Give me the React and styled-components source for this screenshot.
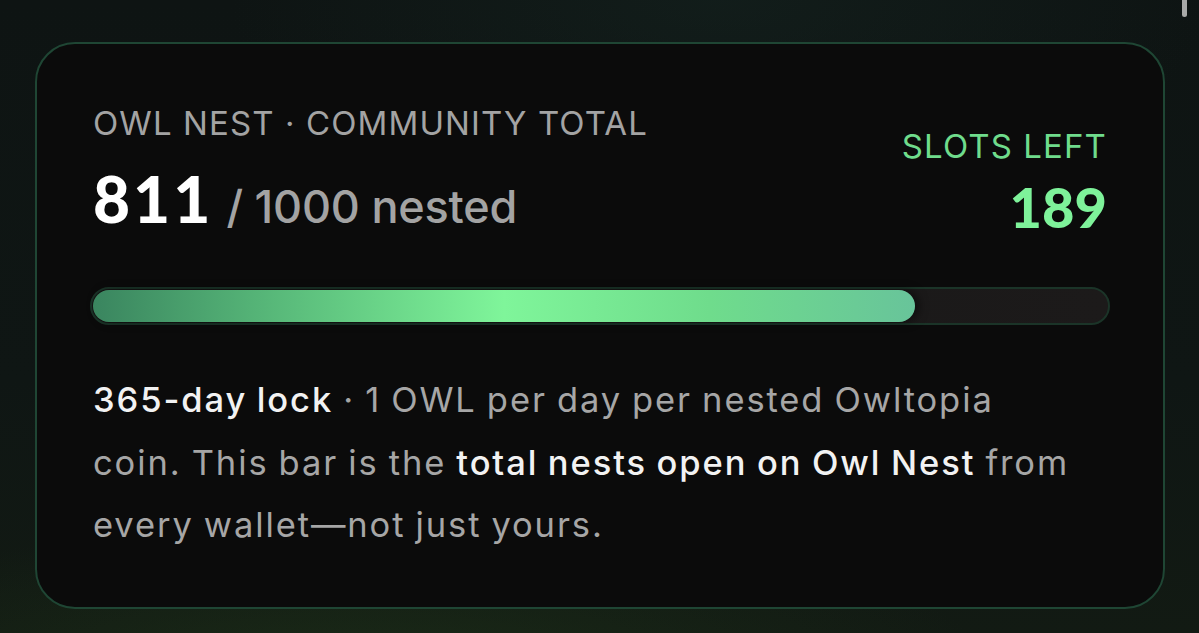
import React from "react";
import styled, { createGlobalStyle } from "styled-components";

const Global = createGlobalStyle`
  html, body { margin: 0; padding: 0; height: 100%; }
  body {
    background: #0d1312;
    font-family: "Inter", "Noto Sans", sans-serif;
    overflow: hidden;
  }
  #root { height: 100%; }
`;

const Page = styled.div`
  position: relative;
  width: 1199px;
  height: 633px;
  box-sizing: border-box;
  padding: 42px 34px 24px 35px;
  background:
    radial-gradient(ellipse 900px 200px at 30% 105%, rgba(40, 70, 30, 0.35), transparent 70%),
    radial-gradient(ellipse 700px 300px at 60% 0%, rgba(25, 45, 40, 0.35), transparent 70%),
    linear-gradient(180deg, #0e1413 0%, #0f1614 60%, #121a13 100%);
`;

const Scrollbar = styled.div`
  position: absolute;
  top: -6px;
  right: 12px;
  width: 5px;
  height: 23px;
  border-radius: 3px;
  background: #a9aaa9;
`;

const Card = styled.section`
  height: 100%;
  box-sizing: border-box;
  border: 2px solid #1f4634;
  border-radius: 40px;
  background: #0b0b0b;
  padding: 60px 56px 0 56px;
  display: flex;
  flex-direction: column;
`;

const Header = styled.div`
  display: flex;
  justify-content: space-between;
  align-items: flex-start;
`;

const Block = styled.div`
  display: flex;
  flex-direction: column;
  align-items: ${(p) => (p.$right ? "flex-end" : "flex-start")};
  padding-top: ${(p) => p.$offset || 0}px;
`;

const Label = styled.div`
  font-size: 33px;
  font-weight: 400;
  letter-spacing: 1.1px;
  color: ${(p) => (p.$accent ? "#6fdc8c" : "#a3a3a3")};
  line-height: 38px;
`;

const Count = styled.div`
  display: flex;
  align-items: baseline;
  gap: 13px;
  margin-top: 25px;
  line-height: 1;
`;

const Big = styled.span`
  font-family: "Lato", "Inter", sans-serif;
  font-size: 64px;
  font-weight: 900;
  color: #ffffff;
  letter-spacing: 3px;
`;

const Total = styled.span`
  font-size: 45px;
  font-weight: 500;
  color: #a3a3a3;
  letter-spacing: -0.2px;
`;

const Slots = styled.div`
  font-family: "Lato", "Inter", sans-serif;
  font-size: 56px;
  font-weight: 900;
  color: #7ef29a;
  line-height: 1;
  margin-top: 14px;
`;

const Track = styled.div`
  margin: 52px -3px 0;
  height: 38px;
  box-sizing: border-box;
  border-radius: 19px;
  background: linear-gradient(90deg, #161616, #1c1a1a);
  border: 2px solid #1b3428;
  padding: 1px;
  display: flex;
`;

const Fill = styled.div`
  height: 100%;
  border-radius: 17px;
  background: linear-gradient(
    90deg,
    #3a855f 0%,
    #55b477 20%,
    #7ff59a 50%,
    #6fdc8c 75%,
    #68c49a 100%
  );
  box-shadow: 4px 0 10px rgba(0, 0, 0, 0.5);
`;

const Body = styled.p`
  margin: 44px 0 0;
  max-width: 990px;
  font-size: 34.5px;
  line-height: 62.5px;
  color: #a6a6a6;
  font-weight: 400;
  letter-spacing: 1.9px;
  word-spacing: -1.5px;
`;

const Strong = styled.strong`
  color: #f2f2f2;
  font-weight: 500;
`;

export default function App() {
  const nested = 811;
  const max = 1000;
  return (
    <>
      <Global />
      <Page>
        <Scrollbar />
        <Card>
          <Header>
            <Block>
              <Label>OWL NEST · COMMUNITY TOTAL</Label>
              <Count>
                <Big>{nested}</Big>
                <Total>/ {max} nested</Total>
              </Count>
            </Block>
            <Block $right $offset={23}>
              <Label $accent>SLOTS LEFT</Label>
              <Slots>{max - nested}</Slots>
            </Block>
          </Header>
          <Track>
            <Fill style={{ width: `${(nested / max) * 100}%` }} />
          </Track>
          <Body>
            <Strong>365-day lock</Strong> · 1 OWL per day per nested Owltopia
            coin. This bar is the <Strong>total nests open on Owl Nest</Strong>{" "}
            from every wallet—not just yours.
          </Body>
        </Card>
      </Page>
    </>
  );
}
